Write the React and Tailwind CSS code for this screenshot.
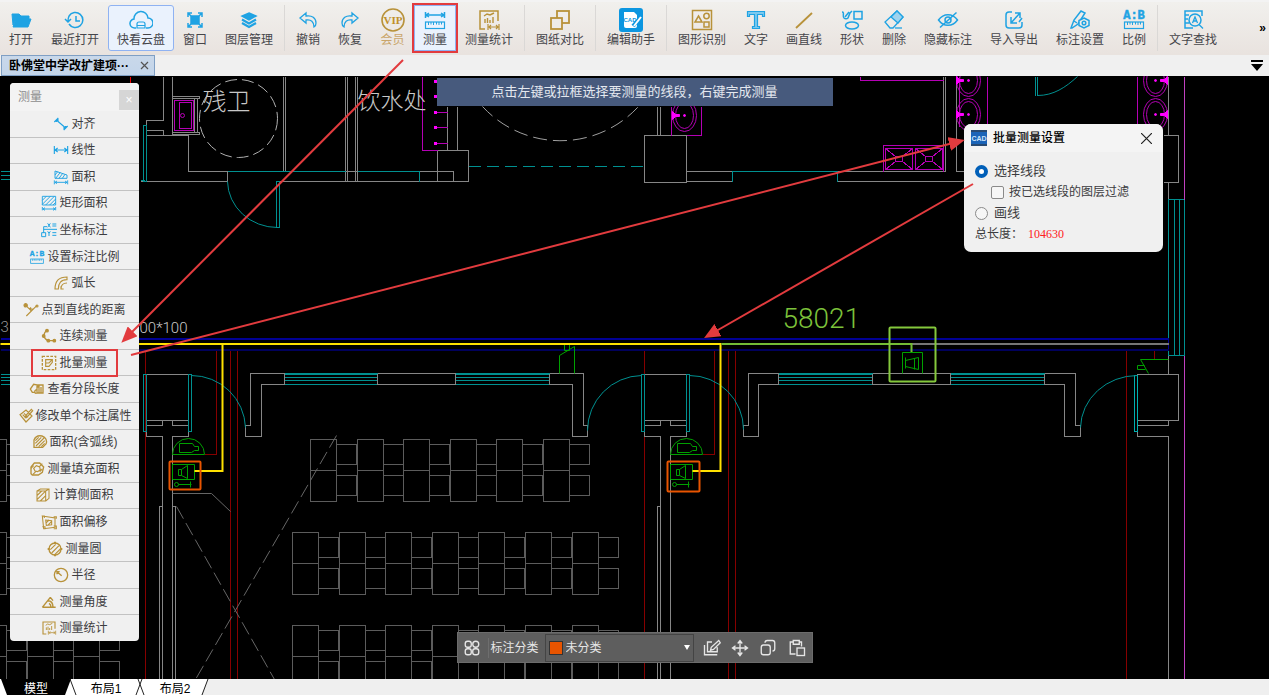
import React from 'react';

const BLUE = '#1fa3e3';
const GOLD = '#b8923a';

const Icon = ({ size = 24, color = BLUE, width = 1.5, children }) => (
  <svg width={size} height={size} viewBox="0 0 24 24" fill="none" stroke={color} strokeWidth={width} className="shrink-0">
    {children}
  </svg>
);

const Ruler = ({ y = 14 }) => (
  <g>
    <rect x="2.5" y={y} width="19" height="6.500" strokeWidth="1.200" />
    <path d={`M5.5 ${y}v3M8 ${y}v2.500M10.500 ${y}v3M13.500 ${y}v2.500M16 ${y}v3M18.500 ${y}v2.500`} strokeWidth="1" />
  </g>
);

const RatioText = ({ y, color }) => (
  <text x="12" y={y} textAnchor="middle" fill={color} stroke={color} strokeWidth="0.500" className="font-['Liberation_Mono',monospace] text-[12px] font-bold">A:B</text>
);

const StatShape = () => (
  <g>
    <path d="M8 21H3V3h18v10" />
    <path d="M7 8l3-2 3 1 4-2M8 15v-4M10.500 15v-5M13 15v-3M16 15V9" strokeWidth="1.400" />
    <path d="M11 16v6M22 16v6M12 19h9M14 17l-2 2 2 2M19 17l2 2-2 2" strokeWidth="1.200" />
  </g>
);

const tools = [
  { name: '打开', w: 'w-[42px]', icon: <Icon><path d="M3 6h7l2 2h8v3H7l-3 6z M7 11h15l-3 8H4z" fill={BLUE} strokeWidth="1" /></Icon> },
  { name: '最近打开', w: 'w-[66px]', icon: <Icon><path d="M6 8a7.500 7.500 0 1 1 0 8M13 8v5h4M2 11l3 3 3-3M5 14c0-3 0-4 1-6" /></Icon> },
  { name: '快看云盘', w: 'w-[66px]', active: true, icon: <Icon size={24}><path d="M7 20H6a4.500 4.500 0 0 1-1-9 7 7 0 0 1 14-1 5 5 0 0 1 0 10h-2" /><path d="M8 20v-4a2 2 0 0 1 2-2h4a2 2 0 0 1 2 2v4zM8 17.500h8" strokeWidth="1.200" /></Icon> },
  { name: '窗口', w: 'w-[42px]', icon: <Icon><rect x="8" y="8" width="8" height="8" fill={BLUE} /><path d="M5 9V5h4M15 5h4v4M19 15v4h-4M9 19H5v-4M5 5l3 3M19 5l-3 3M19 19l-3-3M5 19l3-3" /></Icon> },
  { name: '图层管理', w: 'w-[66px]', sep: true, icon: <Icon><path d="M12 5l7 3-7 4-7-4z" fill={BLUE} /><path d="M5 11.500l7 4 7-4M5 15l7 4 7-4" strokeWidth="2.200" /></Icon> },
  { name: '撤销', w: 'w-[42px]', icon: <Icon width={1.3}><path d="M10 5L4 10l6 5v-3c5-1 8 2 8 7 2-1 2-3 2-4 0-5-4-8-10-7z" /></Icon> },
  { name: '恢复', w: 'w-[42px]', icon: <Icon width={1.3}><path d="M14 5l6 5-6 5v-3c-5-1-8 2-8 7-2-1-2-3-2-4 0-5 4-8 10-7z" /></Icon> },
  { name: '会员', w: 'w-[43px]', gold: true, icon: <Icon color={GOLD}><circle cx="12" cy="12" r="11" strokeWidth="1.600" /><text x="12" y="16" textAnchor="middle" fill="#c0902a" stroke="none" className="font-['Liberation_Serif',serif] text-[11px] font-bold">VIP</text></Icon> },
  { name: '测量', w: 'w-[42px]', active: true, marked: true, icon: <Icon><path d="M2.500 4v6M21.500 4v6M3 7h18M6 5L3 7l3 2M18 5l3 2-3 2" /><Ruler y={14} /></Icon> },
  { name: '测量统计', w: 'w-[66px]', sep: true, icon: <Icon color={GOLD}><StatShape /></Icon> },
  { name: '图纸对比', w: 'w-[66px]', sep: true, icon: <Icon color={GOLD} width={1.8}><rect x="9" y="3" width="12" height="12" /><rect x="3" y="10" width="11" height="11" fill="#eeebe8" /></Icon> },
  { name: '编辑助手', w: 'w-[66px]', sep: true, icon: <Icon color="#fff"><rect x="0" y="0" width="24" height="24" rx="3" fill="#0c96e0" stroke="none" /><path d="M5 4h10l3 3v11a2 2 0 0 1-2 2H7a2 2 0 0 1-2-2z" fill="#fff" stroke="none" /><text x="11" y="14" textAnchor="middle" fill="#0c96e0" stroke="none" className="font-['Liberation_Sans',sans-serif] text-[6px] font-bold">CAD</text><path d="M14 18l8-9" stroke="#0c96e0" strokeWidth="4" /><path d="M15 18l7-9" strokeWidth="2" /></Icon> },
  { name: '图形识别', w: 'w-[66px]', icon: <Icon color={GOLD}><rect x="2.500" y="2.500" width="19" height="19" /><path d="M8.500 8l3.500 6H5z" /><circle cx="16.500" cy="8" r="2.700" /><rect x="14" y="14" width="5" height="5" /></Icon> },
  { name: '文字', w: 'w-[42px]', icon: <Icon><path d="M3.500 3.500h17v5h-2V6.500h-5v12h2v2h-7v-2h2v-12h-5v2h-2z" fill="#7cc9ef" strokeWidth="1.200" /></Icon> },
  { name: '画直线', w: 'w-[54px]', icon: <Icon color={GOLD} width={1.8}><path d="M4 20L20 5" /></Icon> },
  { name: '形状', w: 'w-[42px]', icon: <Icon><rect x="14" y="3.500" width="8" height="7.500" /><ellipse cx="12" cy="17.500" rx="6.500" ry="3.500" /><path d="M2 4c3 0 0 5 2 6 1 1 3 1 4 0l2-5 2-2M5 9l4-5" /></Icon> },
  { name: '删除', w: 'w-[42px]', icon: <Icon width={1.3}><path d="M15 3l6 6-10 11H8l-5-6z" /><path d="M15 3l6 6-5 6-7-6z" fill="#9fd3ee" /><path d="M13 20h7" /></Icon> },
  { name: '隐藏标注', w: 'w-[66px]', icon: <Icon><path d="M2.500 12c5-7 14-7 19 0-5 7-14 7-19 0z" /><circle cx="12" cy="12" r="3" /><path d="M4 19.500L20.500 4.500" /></Icon> },
  { name: '导入导出', w: 'w-[66px]', icon: <Icon><path d="M10 4H7a3 3 0 0 0-3 3v10a3 3 0 0 0 3 3h10a3 3 0 0 0 3-3v-3" /><path d="M9 9v6h6M9 15l9-10M13 5h5v5M20 10l-3 4" /></Icon> },
  { name: '标注设置', w: 'w-[66px]', icon: <Icon><path d="M3 20l3-8 7-9 4 2-7 11-6 4zM6 13l3 2" /><path d="M16 10l5 2.500v5L16 20l-5-2.500v-5z" fill="#eeebe8" /><circle cx="16" cy="15" r="1.800" /></Icon> },
  { name: '比例', w: 'w-[42px]', sep: true, icon: <Icon><RatioText y="11" color={BLUE} /><Ruler y={14} /></Icon> },
  { name: '文字查找', w: 'w-[66px]', icon: <Icon><path d="M12 20H4V3h17v5M4 7h4M4 11h3M4 15h4" /><circle cx="14" cy="12" r="6" /><path d="M18 16.500l4 4M11.500 15l2.500-6 2.500 6M12.500 13h3" strokeWidth="1.300" /></Icon> },
];

const hatch = 'M5 10l5-5M5 14l9-9M6 18L18 6M10 19l9-9M14 19l5-5';

const measures = [
  { name: '对齐', c: BLUE, shape: <path d="M5 6l14 12M2 9l6-6M16 21l6-6M5 9V6h4M19 15v3h-4" /> },
  { name: '线性', c: BLUE, shape: <path d="M2 6v12M22 6v12M3 12h18M7 9l-4 3 4 3M17 9l4 3-4 3" /> },
  { name: '面积', c: BLUE, shape: <path strokeWidth="1.400" d="M3 3v11h18V9zM3 9l4-5M4 14l7-9M9 14l6-8M14 14l4-6M2 17v6M22 17v6M3 20h18M6 18l-3 2 3 2M18 18l3 2-3 2" /> },
  { name: '矩形面积', c: BLUE, shape: <path strokeWidth="1.400" d="M2 2h20v13H2zM2 8l6-6M2 14L14 2M7 15L20 2M13 15l9-9M18 15l4-4M2 18v5M22 18v5M3 21h18M6 19l-3 2 3 2M18 19l3 2-3 2" /> },
  { name: '坐标标注', c: BLUE, shape: <path strokeWidth="1.500" d="M1 16h6v6H1zM4 16V7h5M10 2l4 6M14 2l-4 6M17 3h6M17 6h6M4 11h20M10 14l2 3 2-3M12 17v4M17 16h6M17 20h6" /> },
  { name: '设置标注比例', c: BLUE, shape: <><RatioText y="11" color={BLUE} /><Ruler y={15} /></> },
  { name: '弧长', c: GOLD, shape: <path d="M3 21C3 9 9 3 21 3v4C12 7 8 12 8 21zM12 21c0-6 4-9 9-9M12 17v4h4" /> },
  { name: '点到直线的距离', c: GOLD, shape: <><path d="M5 21L21 5M3 4l9 9M12 8l-2 2 5 1" /><circle cx="4" cy="5" r="2.500" fill={GOLD} /><circle cx="21" cy="6" r="1.500" /></> },
  { name: '连续测量', c: GOLD, shape: <><path d="M9 3C3 8 3 15 10 19h11" strokeWidth="2" /><g fill={GOLD}><circle cx="9" cy="4" r="2" /><circle cx="4" cy="12" r="2" /><circle cx="11" cy="19" r="2" /><circle cx="20" cy="19" r="2" /></g></> },
  { name: '批量测量', c: GOLD, marked: true, shape: <><rect x="2" y="2" width="20" height="20" strokeDasharray="4 2" strokeWidth="2" /><path d="M7 7h10v4l-5 6H7zM7 12h5l5-5" /></> },
  { name: '查看分段长度', c: GOLD, shape: <path d="M10 17H5l-3-5 5-7 6 1v4M12 6h9v12h-9zM15 6v12M18 9v8M12 18c-4 2-5-3-1-5" strokeWidth="2" /> },
  { name: '修改单个标注属性', c: GOLD, shape: <path d="M3 10l9-7 9 9-9 9zM7 10l5 5 5-5M9 8l6 6M20 2l-8 9-1 3 3-1 8-9z" strokeWidth="1.800" /> },
  { name: '面积(含弧线)', c: GOLD, shape: <><path d="M3 20V9c2-5 7-7 12-6 6 2 8 7 6 12l-5 5z" strokeWidth="2" /><path d={hatch} /></> },
  { name: '测量填充面积', c: GOLD, shape: <><path d="M3 19V9l5-6h8l6 6-2 8-6 4H5z" strokeWidth="2" /><path d="M9 15l-2-4 4-4 5 2 1 4-4 3zM3 11l4-4M16 8l4-4M16 16l4-4M6 20l4-4" /></> },
  { name: '计算侧面积', c: GOLD, shape: <path d="M3 6h13v15H3zM3 6l5-3h13v14l-5 4M16 6l5-3M3 13l7-7M3 19L15 7M8 21l8-8" strokeWidth="1.600" /> },
  { name: '面积偏移', c: GOLD, shape: <path d="M2 3l19 3v14l-17 2zM7 9l9 1v6l-8 1zM7 14l5-5M10 17l6-6M2 3h3v3M19 4h4v3M19 18h4v4h-4M2 19h4v4" strokeWidth="1.600" /> },
  { name: '测量圆', c: GOLD, shape: <><circle cx="12" cy="12" r="9" strokeWidth="2" /><path d="M5 13l8-8M7 18L18 7M12 20l8-8" /><path d="M1 12h3M20 12h3M12 1v3M12 20v3" strokeWidth="3" /></> },
  { name: '半径', c: GOLD, shape: <path d="M12 2a10 10 0 1 1 0 20 10 10 0 0 1 0-20zM13 13L6 7M6 11V7h4" strokeWidth="2" /> },
  { name: '测量角度', c: GOLD, shape: <path d="M2 20L14 5M2 20h20M10 10c5 0 8 4 8 10M12 14c2 1 3 3 3 6M14 5l4 5" strokeWidth="2.200" /> },
  { name: '测量统计', c: GOLD, shape: <StatShape /> },
];

const Toolbar = () => (
  <header className="flex h-[55px] shrink-0 items-center border-t-2 border-b border-t-[#f3f3f3] border-b-[#e9e3df] bg-linear-to-b from-[#f1f0ed] to-[#e9e3df]">
    {tools.map((tool) => (
      <React.Fragment key={tool.name}>
        <button
          type="button"
          className={`flex h-[46px] shrink-0 flex-col items-center justify-center border text-[12px] leading-[16px] whitespace-nowrap ${tool.w} ${tool.active ? 'border-[#8fb2f2] bg-[#eaf2fd]' : 'border-transparent'} ${tool.gold ? 'text-[#c9a56a]' : 'text-[#45454a]'} ${tool.marked ? 'outline-2 outline-[#e23b3e]' : 'rounded-[3px]'}`}
        >
          {tool.icon}
          <span>{tool.name}</span>
        </button>
        {tool.sep && <div className="mx-[2px] h-[46px] w-px shrink-0 bg-[#dad8d6]" />}
      </React.Fragment>
    ))}
    <button type="button" className="ml-auto pr-[3px] text-[12px] font-bold text-black" aria-label="更多">»</button>
  </header>
);

const FileTabs = () => (
  <div className="flex h-[21px] shrink-0 items-center justify-between bg-[#f0f0f0] pr-[6px]">
    <div className="ml-px flex h-full w-[154px] items-center gap-1 border border-[#7f9fc4] bg-linear-to-b from-[#c9d8ea] to-[#c3d5ea] pl-[7px]">
      <span className="text-[12px] leading-[16px] font-bold whitespace-nowrap text-black">卧佛堂中学改扩建项···</span>
      <button type="button" aria-label="关闭" className="ml-auto pr-[5px]">
        <svg width="9" height="9" viewBox="0 0 9 9" stroke="#555" strokeWidth="1.200"><path d="M1 1l7 7M8 1L1 8" /></svg>
      </button>
    </div>
    <button type="button" aria-label="文件列表">
      <svg width="12" height="12" viewBox="0 0 12 12"><path d="M0 0h12v2H0zM0 4h12l-6 7z" /></svg>
    </button>
  </div>
);

const WALL = '#868686';
const DESK = '#5c5c5c';
const CYAN = '#009090';
const PINK = '#b400b4';
const RED = '#860000';
const GREEN = '#00a000';

// One block of classroom desks: wide tables joined by narrower ones
const DeskRow = ({ x, y, count }) => {
  const desks = [];
  for (let i = 0; i < count; i++) {
    const left = Math.round(x + i * 46.6);
    desks.push(
      <path key={i} d={`M${left} ${y}h26v62h-26zM${left} ${y + 31}h26M${left + 26} ${y + 5}h20v20h-20M${left + 26} ${y + 36}h20v20h-20`} />
    );
  }
  return <g stroke={DESK}>{desks}</g>;
};

const Windows = ({ x, w }) => (
  <g>
    <path stroke={CYAN} d={`M${x} 373h${w}M${x} 374h${w}M${x} 377h${w}M${x} 380h${w}M${x} 384h${w}`} />
    <path stroke={WALL} d={`M${x} 373v11M${x + w} 373v11`} />
  </g>
);

const Basin = ({ x, y, flip }) => (
  <g stroke={PINK}>
    <ellipse cx={x} cy={y} rx="12" ry="16" />
    <ellipse cx={x} cy={y} rx="9" ry="13" />
    <circle cx={x} cy={y} r="1" fill="#f0f" stroke="#f0f" />
    <path fill="#f0f" stroke="#f0f" d={flip ? `M${x + 12} ${y - 4}v8l-3-3h-4v-2h4z` : `M${x - 12} ${y - 4}v8l3-3h4v-2h-4z`} />
  </g>
);

const Pillar = ({ x }) => (
  <g>
    <path stroke={WALL} d={`M${x} 374h42v46h-42zM${x} 425h16v-5M${x + 26} 420v5h16M${x} 425v11h16v243M${x + 42} 425v11h-16v243M${x + 13} 679v-173h3`} />
    <path stroke={CYAN} d={`M${x - 3} 374h3v57h-3zM${x + 42} 374h3v57h-3z`} />
  </g>
);

const Speaker = ({ x }) => (
  <g stroke={GREEN}>
    <path d={`M${x} 454a16 16 0 0 1 32 0zM${x + 7} 443h13l2 3h4v4h-4l-3 2h-12z`} />
    <path d={`M${x} 464h22v15h-22zM${x + 6} 469h3v6h-3zM${x + 9} 469l6-4v13l-6-3`} />
    <path d={`M${x + 6} 484h13M${x + 18} 481v6`} />
    <circle cx={x + 4} cy="484" r="2" />
  </g>
);

const Sink = ({ x }) => (
  <path stroke={PINK} d={`M${x} 148h27v21h-27zM${x} 148l10 8M${x + 27} 148l-10 8M${x} 169l10-8M${x + 27} 169l-10-8M${x + 10} 156h7v5h-7z`} />
);

const Drawing = () => (
  <svg className="absolute inset-0 h-full w-full" fill="none" strokeWidth="1">
    <g transform="translate(0.5 -75.5)">
      <g shapeRendering="crispEdges">
        {/* desks */}
        <DeskRow x={310} y={439} count={6} />
        <DeskRow x={292} y={532} count={7} />
        <DeskRow x={292} y={625} count={7} />
        <DeskRow x={-20} y={439} count={2} />
        <DeskRow x={-20} y={532} count={2} />
        <DeskRow x={-20} y={625} count={3} />

        {/* upper rooms */}
        <path stroke={WALL} d="M163 76v44h-17v5M146 130h17v5h9V76M146 135h42v36h39v10H140M172 96h27v2h-27M172 132h27v2h-27M194 98v34M197 98v34" />
        <path stroke={PINK} d="M174 100h19v30h-19zM179 102h12v26h-12z" />
        <path stroke={WALL} d="M283 76v95M285 76v95M345 76v105M347 76v105M355 76v105M357 76v105M279 181h140M345 171h12" />
        <path stroke={CYAN} d="M0 171h10M0 175h10M0 179h10M227 171h118M357 171h62v10M143 125h3v56h-3zM140 180h4M276 181h3v46h-3z" />
        <path stroke={WALL} d="M437 150h31v31h-31zM419 171h34v10M419 181h18M447 106v44M457 106v44M644 135h42v47h-42zM657 106v29M660 106v29M686 171h46M686 181h46M837 171h108V76M943 76v69M837 181h128M956 76v95h10M1163 135h15v47h-15M1168 76v59M1168 182v17M1168 355v19" />
        <path stroke={CYAN} strokeDasharray="12 6" d="M468 166h176" />
        <path stroke={CYAN} d="M732 181v-10h105v10M1035 76v19M1037 76v19M1168 199h16v156h-16zM1174 199v156M1179 199v156" />
        <path stroke={PINK} d="M422 76v74h15M434 112h13M434 127h13M434 143h13M686 135h15v-29M671 106v29M860 76v4h83M883 171v-26h60v26M987 76v50M1137 76v50M959 76v50" />
        <path stroke="#f0f" strokeWidth="3" d="M433 81h3M433 96h3M433 112h3M433 127h3M433 143h3" />
        <Sink x={885} />
        <Sink x={915} />
        <path stroke="#c040c0" d="M1184 76v123M1184 355v324" />

        {/* lower rooms */}
        <path stroke={RED} d="M145 350v329M216 350v104h-12M230 350v329M237 350v329M644 350v329M714 350v104h-12M728 350v329M735 350v329M1126 350v329M1154 350v9" />
        <path stroke="#f00000" d="M130 76v8" />
        <path stroke={WALL} d="M250 373h333v52h4v11h-15v-52H261v52h-16v-11h5zM748 373h327v52h5v11h-16v-52H758v52h-15v-11h5z" />
        <Windows x={284} w={93} />
        <Windows x={455} w={94} />
        <Windows x={778} w={94} />
        <Windows x={950} w={94} />
        <path stroke={CYAN} d="M0 374h10M0 377h10M0 380h10M0 384h10" />
        <Pillar x={146} />
        <Pillar x={644} />
        <path stroke={WALL} d="M175 679V506h-3M1137 374h41v46h-41zM1137 425h31v-5M1137 425v11h31v243M1168 374v-19" />
        <path stroke="#00b0b0" d="M1134 375h3v56h-3z" />

        {/* cable trays */}
        <path stroke="#000094" d="M0 338h1168v12M0 339h1168" />
        <path stroke="#00005c" d="M0 349h1168M0 350h1168" />
        <path stroke="#777" d="M911 343h257M911 344h257" />
      </g>

      <Basin x={684} y={115} />
      <Basin x={968} y={80} />
      <Basin x={968} y={114} />
      <Basin x={1155} y={80} flip />
      <Basin x={1155} y={114} flip />
      <circle cx="182" cy="115" r="2" stroke={PINK} />
      <circle cx="238" cy="118" r="39" stroke="#b0b0b0" strokeDasharray="12 5" />
      <path stroke="#a0a0a0" strokeDasharray="14 6" d="M482 106a106 106 0 0 0 156 0" />
      <path stroke={CYAN} d="M227 181a50 47 0 0 0 50 46M1037 95c16 0 28-8 40-19M191 375a54 54 0 0 1 54 52M587 430a55 55 0 0 1 54-55M689 375a54 54 0 0 1 54 54M1080 427a57 53 0 0 1 57-52" />
      <path stroke="#666" strokeDasharray="14 5" d="M176 506l98 173M336 435L195 679" />
      <path stroke="#666" d="M172 493h39l19 18" />

      <Speaker x={172} />
      <Speaker x={670} />
      <path stroke={GREEN} d="M559 373v-18l15-9v27M564 343h5v7h-5zM902 373v-21h20v21M905 357v11M905 360l13-3v12l-13-3M914 358v11M1168 359h-28l8 14M1144 365h-7v4h8" />

      <path stroke="#ffe100" strokeWidth="2" d="M0 343.500h720v127h-28M222 343.500v127h-28" />
      <path stroke="#74bd35" strokeWidth="2" d="M721 343.500h190v8" />
      <rect x="889" y="327" width="46" height="54" rx="1" stroke="#84c83c" strokeWidth="2" />
      <rect x="169" y="461" width="31" height="28" rx="1" stroke="#e85400" strokeWidth="2" />
      <rect x="667" y="461" width="32" height="30" rx="1" stroke="#e85400" strokeWidth="2" />

      <g stroke="none" className="font-['Roboto','Noto_Sans_CJK_SC',sans-serif] font-light">
        <text x="782" y="327" fill="#7cc23a" className="text-[28px]">58021</text>
        <text x="139" y="332" fill="#c8c8c8" className="text-[15px]">00*100</text>
        <text x="202" y="109" fill="#c8c8c8" className="text-[24px]">残卫</text>
        <text x="357" y="108" fill="#c8c8c8" className="text-[23px]">饮水处</text>
        <text x="0" y="331" fill="#999" className="text-[15px]">3</text>
      </g>
    </g>
  </svg>
);

const MeasurePanel = () => (
  <aside className="absolute top-[7px] left-[10px] w-[129px] overflow-hidden rounded-[4px] bg-[#f0f0f0]">
    <div className="flex h-[28px] items-center justify-between bg-[#f3f3f3] pl-2">
      <h2 className="text-[12px] leading-[16px] text-[#8c8c8c]">测量</h2>
      <button type="button" aria-label="关闭测量" className="mt-[5px] flex h-[20px] w-[20px] items-center justify-center bg-[#d6d6d6] text-[12px] text-white">×</button>
    </div>
    <ul className="flex h-[530px] flex-col divide-y divide-[#c2c2c2]">
      {measures.map((item) => (
        <li key={item.name} className="flex min-h-0 flex-1 items-center justify-center">
          <button
            type="button"
            className={`flex h-[24px] items-center justify-center gap-[2px] px-2 text-[12px] leading-[16px] whitespace-nowrap text-[#3c3c40] ${item.marked ? 'outline-2 outline-[#e23b3e]' : ''}`}
          >
            <Icon size={16} color={item.c} width={1.7}>{item.shape}</Icon>
            <span>{item.name}</span>
          </button>
        </li>
      ))}
    </ul>
  </aside>
);

const BatchDialog = () => (
  <section className="absolute top-[48px] right-[106px] w-[199px] overflow-hidden rounded-[7px] bg-[#f0f0f0] pb-[8px] text-[#3c3c40]">
    <div className="flex h-[28px] items-center bg-[#f4f4f4] pr-[11px] pl-[7px]">
      <svg width="16" height="16" viewBox="0 0 16 16">
        <rect width="16" height="16" fill="#1b64b8" />
        <path d="M0 0h16v2H0zM0 14h16v2H0z" fill="#284a72" />
        <text x="8" y="11" textAnchor="middle" fill="#cfe4fa" className="font-['Liberation_Sans',sans-serif] text-[7px] font-bold">CAD</text>
      </svg>
      <h2 className="ml-[6px] text-[12px] leading-[16px] font-medium text-black">批量测量设置</h2>
      <button type="button" aria-label="关闭设置" className="ml-auto">
        <svg width="11" height="11" viewBox="0 0 11 11" stroke="#222" strokeWidth="1.200"><path d="M0 0l11 11M11 0L0 11" /></svg>
      </button>
    </div>
    <div className="flex flex-col pt-[8px] pl-[11px]">
      <label className="flex h-[22px] items-center gap-[6px] text-[13px]">
        <input type="radio" name="mode" defaultChecked className="h-[13px] w-[13px] appearance-none rounded-full border border-[#8a8a8a] bg-[#f6f6f6] checked:border-4 checked:border-[#005fb8] checked:bg-white" />
        选择线段
      </label>
      <label className="ml-4 flex h-[20px] items-center gap-[5px] text-[12px]">
        <input type="checkbox" className="h-[13px] w-[13px] appearance-none rounded-[2px] border border-[#8a8a8a] bg-[#f6f6f6] checked:bg-[#005fb8]" />
        按已选线段的图层过滤
      </label>
      <label className="flex h-[22px] items-center gap-[6px] text-[13px]">
        <input type="radio" name="mode" className="h-[13px] w-[13px] appearance-none rounded-full border border-[#8a8a8a] bg-[#f6f6f6] checked:border-4 checked:border-[#005fb8] checked:bg-white" />
        画线
      </label>
      <p className="flex h-[20px] items-center text-[12px]">
        <span className="w-[53px] whitespace-nowrap">总长度：</span>
        <span className="font-['Liberation_Serif',serif] text-[#ff2020]">104630</span>
      </p>
    </div>
  </section>
);

const ClassifyBar = () => (
  <div className="absolute inset-x-0 bottom-[16px] mx-auto flex h-[31px] w-[356px] items-center border border-[#6c6c6c] bg-[#5e5e5e] text-[12px] text-[#e6e6e6]">
    <button type="button" aria-label="分类" className="px-[5px]">
      <Icon size={18} color="#e6e6e6" width={1.8}>
        <rect x="3" y="3" width="8" height="8" rx="3" />
        <circle cx="17" cy="7" r="4" />
        <rect x="3" y="13" width="8" height="8" rx="3" />
        <rect x="13" y="13" width="8" height="8" rx="3" />
      </Icon>
    </button>
    <div className="mx-[2px] h-[20px] w-px bg-[#6e6e6e]" />
    <label htmlFor="category" className="whitespace-nowrap">标注分类</label>
    <div className="ml-[6px] flex h-[28px] w-[149px] items-center border border-[#444] bg-[#5e5e5e] pr-[3px] pl-[3px]">
      <span className="h-[14px] w-[14px] shrink-0 border border-[#333] bg-[#e85400]" />
      <select id="category" className="h-full min-w-0 flex-1 appearance-none bg-transparent pl-[3px] text-[12px] text-[#e6e6e6]">
        <option>未分类</option>
      </select>
      <svg width="6" height="5" viewBox="0 0 6 5" fill="#fff"><path d="M0 0h6L3 5z" /></svg>
    </div>
    <div className="flex flex-1 items-center justify-between pr-[6px] pl-[9px]">
      <button type="button" aria-label="编辑">
        <Icon size={18} color="#e6e6e6" width={1.8}><path d="M12 4H6v13h13v-6M2 8v13h17M21 2l-10 9-1 4 4-1 9-9z" /></Icon>
      </button>
      <button type="button" aria-label="移动">
        <Icon size={18} color="#e6e6e6" width={1.8}><path d="M12 3v18M3 12h18M9 6l3-4 3 4M9 18l3 4 3-4M6 9l-4 3 4 3M18 9l4 3-4 3" /></Icon>
      </button>
      <button type="button" aria-label="复制">
        <Icon size={18} color="#e6e6e6" width={1.8}><rect x="3" y="8" width="12" height="13" rx="3" /><path d="M8 5c0-2 1-3 3-3h7c2 0 3 1 3 3v8c0 2-1 3-3 3" /></Icon>
      </button>
      <button type="button" aria-label="粘贴">
        <Icon size={18} color="#e6e6e6" width={1.8}><path d="M10 20H3V4h4M15 4h3v6M7 2h8v5H7z" /><rect x="12" y="12" width="10" height="10" /></Icon>
      </button>
    </div>
  </div>
);

const LayoutTabs = () => (
  <nav className="relative flex h-[16px] shrink-0 overflow-hidden bg-[#efefef] text-[12px] leading-[16px] text-black">
    <svg width="212" height="16" className="absolute top-0 left-0">
      <path d="M0 0h208l-7 16H0z" fill="#fff" />
      <path d="M1 0h70l-6 16H7z" fill="#000" />
      <path d="M70 0l6 16M142 0l-6 16M138 0l6 16M208 0l-6 16" stroke="#222" fill="none" />
    </svg>
    <button type="button" className="relative w-[72px] pt-[2px] text-white">模型</button>
    <button type="button" className="relative w-[68px] pt-[2px]">布局1</button>
    <button type="button" className="relative w-[70px] pt-[2px]">布局2</button>
  </nav>
);

// Guide arrows that lead through the three steps
const Arrows = () => (
  <svg className="pointer-events-none absolute inset-0 h-full w-full" stroke="#e23b3e" strokeWidth="2">
    <defs>
      <marker id="head" markerWidth="16" markerHeight="14" refX="8" refY="7" orient="auto" markerUnits="userSpaceOnUse">
        <path d="M0 0l16 7-16 7z" fill="#e23b3e" stroke="none" />
      </marker>
    </defs>
    <path d="M403 60L127 337" markerEnd="url(#head)" />
    <path d="M131 355L957 142" markerEnd="url(#head)" />
    <path d="M973 184L711 334" markerEnd="url(#head)" />
  </svg>
);

const App = () => {
  return (
    <div className="relative flex h-screen flex-col overflow-hidden bg-[#f0f0f0] font-['Liberation_Sans','Noto_Sans_CJK_SC',sans-serif]">
      <Toolbar />
      <FileTabs />
      <main className="relative min-h-0 flex-1 overflow-hidden bg-black">
        <Drawing />
        <p className="absolute inset-x-0 top-[2px] mx-auto flex h-[28px] w-[396px] items-center justify-center bg-[#475a7d] text-[13px] whitespace-nowrap text-[#e4e8ef]">
          点击左键或拉框选择要测量的线段，右键完成测量
        </p>
        <MeasurePanel />
        <BatchDialog />
        <ClassifyBar />
      </main>
      <LayoutTabs />
      <Arrows />
    </div>
  );
};

export default App;
